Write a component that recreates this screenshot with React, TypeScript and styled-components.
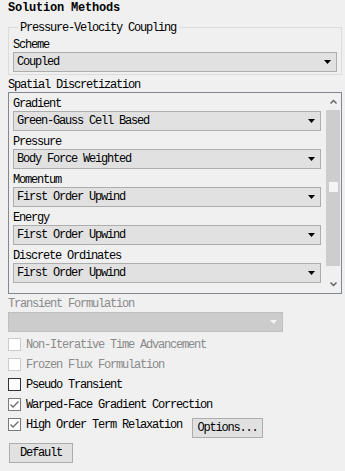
import React from "react";
import styled, { createGlobalStyle } from "styled-components";

const GlobalStyle = createGlobalStyle`
  html, body {
    margin: 0;
    padding: 0;
    background: #f0f0f0;
  }
  body {
    font-family: "Liberation Mono", "DejaVu Sans Mono", monospace;
    font-size: 12px;
    letter-spacing: -1.2px;
    color: #000;
  }
`;

const Page = styled.div`
  width: 345px;
  height: 471px;
  box-sizing: border-box;
  padding: 0 3px 0 8px;
  display: flex;
  flex-direction: column;
`;

const Title = styled.div`
  height: 16px;
  line-height: 17px;
  font-weight: bold;
  letter-spacing: -0.2px;
  margin-bottom: 5px;
`;

const GroupBox = styled.fieldset`
  margin: 0;
  padding: 0 4px 2px 4px;
  border: 1px solid #dcdcdc;
  min-width: 0;
`;

const Legend = styled.legend`
  margin-left: 5px;
  padding: 0 3px 0 2px;
  height: 12px;
  line-height: 14px;
`;

const FieldLabel = styled.div<{ $disabled?: boolean }>`
  height: 18px;
  line-height: 22px;
  color: ${(p) => (p.$disabled ? "#8a8a8a" : "#000")};
`;

const SchemeLabel = styled(FieldLabel)`
  height: 19px;
  line-height: 24px;
`;

const SectionLabel = styled.div`
  height: 17px;
  line-height: 21px;
`;

const SelectBox = styled.div<{ $disabled?: boolean; $width?: number }>`
  box-sizing: border-box;
  height: 20px;
  width: ${(p) => (p.$width ? `${p.$width}px` : "auto")};
  display: flex;
  align-items: center;
  justify-content: space-between;
  padding: 0 5px 0 3px;
  background: ${(p) => (p.$disabled ? "#cccccc" : "#e1e1e1")};
  border: 1px solid ${(p) => (p.$disabled ? "#bfbfbf" : "#adadad")};
`;

const SelectText = styled.span`
  line-height: 19px;
`;

const Arrow = styled.svg`
  flex: none;
`;

const Select = ({
  value,
  disabled,
  width,
}: {
  value?: string;
  disabled?: boolean;
  width?: number;
}) => (
  <SelectBox $disabled={disabled} $width={width}>
    <SelectText>{value}</SelectText>
    <Arrow width="7" height="4" viewBox="0 0 7 4">
      <path d="M0 0h7L3.5 4z" fill={disabled ? "#f4f4f4" : "#000"} />
    </Arrow>
  </SelectBox>
);

const ScrollPanel = styled.div`
  box-sizing: border-box;
  width: 334px;
  height: 202px;
  border: 1px solid #828790;
  display: flex;
  background: #f0f0f0;
`;

const PanelContent = styled.div`
  flex: 1;
  padding: 0 4px 0 4px;
`;

const ScrollBar = styled.div`
  width: 16px;
  display: flex;
  flex-direction: column;
  background: #f0f0f0;
`;

const ScrollButton = styled.div`
  height: 17px;
  display: flex;
  align-items: center;
  justify-content: center;
`;

const Track = styled.div`
  flex: 1;
  display: flex;
  flex-direction: column;
`;

const Thumb = styled.div`
  height: 156px;
  margin: 0 1px;
  background: #cdcdcd;
  display: flex;
  flex-direction: column;
  align-items: center;
  padding-top: 72px;
  box-sizing: border-box;
`;

const Grip = styled.div`
  width: 9px;
  height: 10px;
  background: #f4f4f4;
`;

const Chevron = ({ up }: { up?: boolean }) => (
  <svg width="7" height="5" viewBox="0 0 7 5">
    <path
      d={up ? "M0.5 4.5L3.5 1.5L6.5 4.5" : "M0.5 0.5L3.5 3.5L6.5 0.5"}
      stroke="#606060"
      strokeWidth="1.4"
      fill="none"
    />
  </svg>
);

const TransientLabel = styled(FieldLabel)`
  height: 18px;
  line-height: 21px;
`;

const CheckList = styled.div`
  margin-top: 4px;
  display: flex;
  flex-direction: column;
`;

const CheckRow = styled.div`
  height: 20px;
  display: flex;
  align-items: flex-start;
`;

const Box = styled.div<{ $disabled?: boolean; $checked?: boolean }>`
  box-sizing: border-box;
  width: 13px;
  height: 13px;
  margin-top: 2px;
  background: #fff;
  border: 1px solid
    ${(p) => (p.$disabled ? "#cccccc" : p.$checked ? "#7a7a7a" : "#333333")};
  display: flex;
  align-items: center;
  justify-content: center;
`;

const CheckLabel = styled.span<{ $disabled?: boolean }>`
  margin-left: 5px;
  line-height: 18px;
  color: ${(p) => (p.$disabled ? "#8a8a8a" : "#000")};
`;

const Button = styled.div`
  box-sizing: border-box;
  height: 20px;
  display: flex;
  align-items: center;
  justify-content: center;
  background: #e1e1e1;
  border: 1px solid #adadad;
`;

const OptionsButton = styled(Button)`
  width: 71px;
  margin-top: 2px;
  margin-left: 10px;
`;

const DefaultButton = styled(Button)`
  width: 64px;
  margin: 7px 0 0 1px;
`;

const Check = ({
  label,
  checked,
  disabled,
  children,
}: {
  label: string;
  checked?: boolean;
  disabled?: boolean;
  children?: React.ReactNode;
}) => (
  <CheckRow>
    <Box $checked={checked} $disabled={disabled}>
      {checked && (
        <svg width="11" height="11" viewBox="0 0 11 11">
          <path d="M1.5 5.5L4 8L9.5 2.5" stroke="#6a6a6a" strokeWidth="1.3" fill="none" />
        </svg>
      )}
    </Box>
    <CheckLabel $disabled={disabled}>{label}</CheckLabel>
    {children}
  </CheckRow>
);

const schemes = [
  { label: "Gradient", value: "Green-Gauss Cell Based" },
  { label: "Pressure", value: "Body Force Weighted" },
  { label: "Momentum", value: "First Order Upwind" },
  { label: "Energy", value: "First Order Upwind" },
  { label: "Discrete Ordinates", value: "First Order Upwind" },
];

export default function App() {
  return (
    <Page>
      <GlobalStyle />
      <Title>Solution Methods</Title>

      <GroupBox>
        <Legend>Pressure-Velocity Coupling</Legend>
        <SchemeLabel>Scheme</SchemeLabel>
        <Select value="Coupled" />
      </GroupBox>

      <SectionLabel>Spatial Discretization</SectionLabel>
      <ScrollPanel>
        <PanelContent>
          {schemes.map((s) => (
            <div key={s.label}>
              <FieldLabel>{s.label}</FieldLabel>
              <Select value={s.value} />
            </div>
          ))}
        </PanelContent>
        <ScrollBar>
          <ScrollButton>
            <Chevron up />
          </ScrollButton>
          <Track>
            <Thumb>
              <Grip />
            </Thumb>
          </Track>
          <ScrollButton>
            <Chevron />
          </ScrollButton>
        </ScrollBar>
      </ScrollPanel>

      <TransientLabel $disabled>Transient Formulation</TransientLabel>
      <Select disabled width={275} />

      <CheckList>
        <Check label="Non-Iterative Time Advancement" disabled />
        <Check label="Frozen Flux Formulation" disabled />
        <Check label="Pseudo Transient" />
        <Check label="Warped-Face Gradient Correction" checked />
        <Check label="High Order Term Relaxation" checked>
          <OptionsButton>Options...</OptionsButton>
        </Check>
      </CheckList>

      <DefaultButton>Default</DefaultButton>
    </Page>
  );
}
